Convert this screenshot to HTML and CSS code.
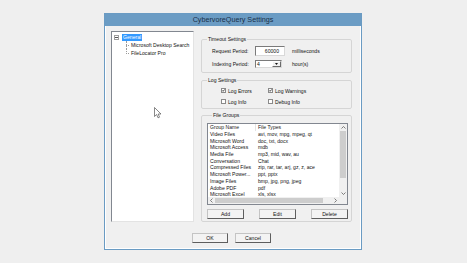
FILE: index.html
```html
<!DOCTYPE html>
<html lang="en">
<head>
  <meta charset="UTF-8">
  <title>CybervoreQuery Settings</title>
  <link rel="stylesheet" href="styles.css">
</head>
<body>
  <div class="window">
    <div class="titlebar">CybervoreQuery Settings</div>
    <div class="client">
      <div class="main">
        <div class="tree">
          <div class="tree-root">
            <span class="expander"><svg width="3" height="1" viewBox="0 0 3 1"><rect width="3" height="1" fill="#555"/></svg></span>
            <span class="node selected">General</span>
          </div>
          <div class="tree-children">
            <div class="tree-child"><span class="node">Microsoft Desktop Search</span></div>
            <div class="tree-child last"><span class="node">FileLocator Pro</span></div>
          </div>
        </div>

        <div class="panel">
          <fieldset class="group timeout">
            <legend>Timeout Settings</legend>
            <div class="fields">
              <span>Request Period:</span>
              <span class="textbox">60000</span>
              <span>milliseconds</span>
              <span>Indexing Period:</span>
              <span class="combo">
                <span class="combo-value">4</span>
                <span class="combo-btn"><svg width="3" height="2" viewBox="0 0 3 2"><path d="M0 0H3L1.5 2Z" fill="#111"/></svg></span>
              </span>
              <span>hour(s)</span>
            </div>
          </fieldset>

          <fieldset class="group log">
            <legend>Log Settings</legend>
            <div class="checks">
              <label class="check-item"><span class="check"><svg width="3" height="3" viewBox="0 0 3 3"><path d="M0.2 1.4L1.1 2.3L2.8 0.4" fill="none" stroke="#111" stroke-width="0.8"/></svg></span>Log Errors</label>
              <label class="check-item"><span class="check"><svg width="3" height="3" viewBox="0 0 3 3"><path d="M0.2 1.4L1.1 2.3L2.8 0.4" fill="none" stroke="#111" stroke-width="0.8"/></svg></span>Log Warnings</label>
              <label class="check-item"><span class="check"></span>Log Info</label>
              <label class="check-item"><span class="check"></span>Debug Info</label>
            </div>
          </fieldset>

          <fieldset class="group files">
            <legend>File Groups</legend>
            <div class="listview">
              <div class="lv-body">
                <div class="lv-header">
                  <span>Group Name</span>
                  <span>File Types</span>
                </div>
                <div class="lv-row"><span>Video Files</span><span>avi, mov, mpg, mpeg, qt</span></div>
                <div class="lv-row"><span>Microsoft Word</span><span>doc, txt, docx</span></div>
                <div class="lv-row"><span>Microsoft Access</span><span>mdb</span></div>
                <div class="lv-row"><span>Media File</span><span>mp3, mid, wav, au</span></div>
                <div class="lv-row"><span>Conversation</span><span>Chat</span></div>
                <div class="lv-row"><span>Compressed Files</span><span>zip, rar, tar, arj, gz, z, ace</span></div>
                <div class="lv-row"><span>Microsoft Power...</span><span>ppt, pptx</span></div>
                <div class="lv-row"><span>Image Files</span><span>bmp, jpg, png, jpeg</span></div>
                <div class="lv-row"><span>Adobe PDF</span><span>pdf</span></div>
                <div class="lv-row"><span>Microsoft Excel</span><span>xls, xlsx</span></div>
              </div>
              <div class="vscroll">
                <span class="arrow"><svg width="5" height="3" viewBox="0 0 5 3"><path d="M0.5 2.5L2.5 0.5L4.5 2.5" fill="none" stroke="#606060" stroke-width="0.8"/></svg></span>
                <span class="vthumb"></span>
                <span class="spacer"></span>
                <span class="arrow"><svg width="5" height="3" viewBox="0 0 5 3"><path d="M0.5 0.5L2.5 2.5L4.5 0.5" fill="none" stroke="#606060" stroke-width="0.8"/></svg></span>
              </div>
              <div class="hscroll">
                <span class="arrow"><svg width="3" height="5" viewBox="0 0 3 5"><path d="M2.5 0.5L0.5 2.5L2.5 4.5" fill="none" stroke="#606060" stroke-width="0.8"/></svg></span>
                <span class="hthumb"></span>
                <span class="spacer"></span>
                <span class="arrow"><svg width="3" height="5" viewBox="0 0 3 5"><path d="M0.5 0.5L2.5 2.5L0.5 4.5" fill="none" stroke="#606060" stroke-width="0.8"/></svg></span>
              </div>
              <div class="corner"></div>
            </div>
            <div class="group-buttons">
              <button class="btn">Add</button>
              <button class="btn">Edit</button>
              <button class="btn">Delete</button>
            </div>
          </fieldset>
        </div>
      </div>

      <div class="dialog-buttons">
        <button class="btn dialog">OK</button>
        <button class="btn dialog">Cancel</button>
      </div>
    </div>
  </div>

  <svg class="cursor" width="8" height="12" viewBox="0 0 8 12">
    <path d="M0.5 0.5V9.5L2.6 7.5L4 10.8L5.5 10.2L4.2 7H7Z" fill="#fff" stroke="#555" stroke-width="0.7" stroke-linejoin="round"/>
  </svg>
</body>
</html>
```

FILE: styles.css
```css
* {
  box-sizing: border-box;
}
body {
  margin: 0;
  padding: 13px 0 0 104px;
  background-color: #efefef;
  font-family: 'Liberation Sans', Arial, sans-serif;
  font-size: 5.1px;
  color: #111;
}
.window {
  width: 258px;
  height: 237px;
  border: 1px solid #6a9bc3;
  background-color: #f0f0f0;
}
.titlebar {
  height: 12px;
  background-color: #6b9cc4;
  color: #1a3049;
  font-size: 7.2px;
  line-height: 12px;
  text-align: center;
}
.client {
  padding: 5px 9px 6px 6px;
  box-shadow: inset 1px 0 #fff, inset -1px 0 #fff, inset 0 -1px #fff;
}
.main {
  display: flex;
  gap: 7px;
  height: 191px;
}

/* tree */
.tree {
  width: 83px;
  padding: 1px 0 0 2px;
  background-color: #fff;
  border: 1px solid;
  border-color: #828790 #e3e3e3 #e3e3e3 #828790;
}
.tree-root {
  display: flex;
  align-items: center;
  height: 8px;
}
.expander {
  display: flex;
  align-items: center;
  justify-content: center;
  width: 5px;
  height: 5px;
  margin-right: 3px;
  border: 1px solid #a0a0a0;
}
.node {
  padding: 0 1px;
  line-height: 7px;
}
.node.selected {
  background-color: #3399ff;
  color: #fff;
}
.tree-children {
  margin-left: 12px;
}
.tree-child {
  position: relative;
  height: 8px;
  padding-left: 4px;
  line-height: 8px;
}
.tree-child::before {
  content: "";
  position: absolute;
  left: 0;
  top: 4px;
  width: 3px;
  border-top: 1px dotted #9a9a9a;
}
.tree-child::after {
  content: "";
  position: absolute;
  left: 0;
  top: 0;
  height: 8px;
  border-left: 1px dotted #9a9a9a;
}
.tree-child.last::after {
  height: 5px;
}

/* right panel */
.panel {
  flex: 1;
  display: flex;
  flex-direction: column;
  padding-top: 5px;
}
.group {
  margin: 0;
  padding: 0;
  min-width: 0;
  border: 1px solid #d5d5d5;
  border-radius: 2px;
}
.group legend {
  margin-left: 5px;
  padding: 0 1px;
  line-height: 6px;
}
.timeout {
  height: 37px;
}
.log {
  height: 32px;
  margin-top: 4px;
}
.files {
  flex: 1;
  margin-top: 3px;
  padding: 5px 3px 0 5px;
}
.fields {
  display: grid;
  grid-template-columns: 43px 37px auto;
  grid-template-rows: 10px 8px;
  row-gap: 4px;
  align-items: center;
  padding: 4px 0 0 10px;
}
.textbox {
  width: 30px;
  height: 10px;
  padding-right: 5px;
  line-height: 8px;
  text-align: right;
  background-color: #fff;
  border: 1px solid;
  border-color: #7a7a7a #d9d9d9 #d9d9d9 #7a7a7a;
}
.combo {
  display: flex;
  width: 27px;
  height: 8px;
  background-color: #fff;
  border: 1px solid;
  border-color: #7a7a7a #d9d9d9 #d9d9d9 #7a7a7a;
}
.combo-value {
  flex: 1;
  padding-left: 1px;
  line-height: 6px;
}
.combo-btn {
  display: flex;
  align-items: center;
  justify-content: center;
  width: 9px;
  background-color: #f0f0f0;
  border: 1px solid;
  border-color: #fff #6a6a6a #6a6a6a #fff;
}
.checks {
  display: grid;
  grid-template-columns: 47px auto;
  grid-auto-rows: 7px;
  row-gap: 4px;
  padding: 4px 0 0 19px;
}
.check-item {
  display: flex;
  align-items: center;
  gap: 2px;
}
.check {
  display: flex;
  align-items: center;
  justify-content: center;
  width: 5px;
  height: 5px;
  background-color: #fff;
  border: 1px solid #8a8a8a;
}

/* list view */
.listview {
  display: grid;
  grid-template-columns: 1fr 8px;
  grid-template-rows: 1fr 7px;
  height: 82px;
  background-color: #fff;
  border: 1px solid #828790;
}
.lv-body {
  overflow: hidden;
}
.lv-header,
.lv-row {
  display: grid;
  grid-template-columns: 47px 1fr;
  white-space: nowrap;
}
.lv-header {
  height: 7px;
  line-height: 7px;
  color: #222;
}
.lv-header span:last-child {
  border-left: 1px solid #e3e3e3;
}
.lv-row {
  height: 6.7px;
  line-height: 6.7px;
}
.lv-header span,
.lv-row span {
  padding-left: 2px;
  overflow: hidden;
}
.lv-row span:last-child {
  padding-left: 3px;
}
.vscroll,
.hscroll {
  display: flex;
  background-color: #f0f0f0;
}
.vscroll {
  flex-direction: column;
}
.arrow {
  display: flex;
  align-items: center;
  justify-content: center;
  flex: 0 0 7px;
}
.spacer {
  flex: 1;
}
.vthumb {
  height: 47px;
  margin: 0 1px;
  background-color: #cdcdcd;
}
.hthumb {
  width: 108px;
  margin: 1px 0;
  background-color: #cdcdcd;
}
.corner {
  background-color: #f0f0f0;
}
.group-buttons {
  display: flex;
  justify-content: space-between;
  margin-top: 4px;
}

/* buttons */
.btn {
  width: 37px;
  height: 10px;
  padding: 0;
  font-family: inherit;
  font-size: 5.1px;
  line-height: 8px;
  color: #111;
  background-color: #f3f3f3;
  border: 1px solid;
  border-color: #c4c4c4 #5e5e5e #5e5e5e #c4c4c4;
}
.dialog-buttons {
  display: flex;
  justify-content: center;
  gap: 7px;
  margin-top: 11px;
}
.btn.dialog {
  width: 36px;
}
.cursor {
  position: absolute;
  left: 154px;
  top: 107px;
}
```
